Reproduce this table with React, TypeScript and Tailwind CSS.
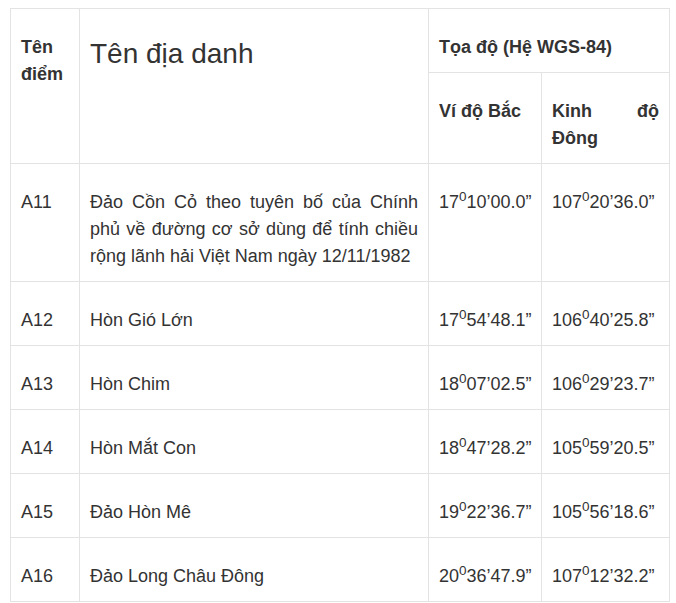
import React from "react";

const rows: { id: string; name: string; lat: [string, string]; lon: [string, string] }[] = [
  {
    id: "A11",
    name: "Đảo Cồn Cỏ theo tuyên bố của Chính phủ về đường cơ sở dùng để tính chiều rộng lãnh hải Việt Nam ngày 12/11/1982",
    lat: ["17", "10’00.0”"],
    lon: ["107", "20’36.0”"],
  },
  { id: "A12", name: "Hòn Gió Lớn", lat: ["17", "54’48.1”"], lon: ["106", "40’25.8”"] },
  { id: "A13", name: "Hòn Chim", lat: ["18", "07’02.5”"], lon: ["106", "29’23.7”"] },
  { id: "A14", name: "Hòn Mắt Con", lat: ["18", "47’28.2”"], lon: ["105", "59’20.5”"] },
  { id: "A15", name: "Đảo Hòn Mê", lat: ["19", "22’36.7”"], lon: ["105", "56’18.6”"] },
  { id: "A16", name: "Đảo Long Châu Đông", lat: ["20", "36’47.9”"], lon: ["107", "12’32.2”"] },
];

function Coord({ v }: { v: [string, string] }) {
  return (
    <>
      {v[0]}
      <sup>0</sup>
      {v[1]}
    </>
  );
}

const cell = "border border-[#e3e3e3] pl-[10px] pr-[10px] pt-[25px] pb-[11px] align-top";

export default function App() {
  return (
    <div
      className="w-[676px] h-[603px] overflow-hidden bg-white text-[#333] text-[18px] leading-[27px] pt-[8px]"
      style={{ fontFamily: '"Liberation Sans", Arial, sans-serif' }}
    >
      <table className="ml-[10px] w-[659px] table-fixed border-collapse">
        <colgroup>
          <col className="w-[69px]" />
          <col className="w-[349px]" />
          <col className="w-[113px]" />
          <col className="w-[128px]" />
        </colgroup>
        <thead>
          <tr>
            <th rowSpan={2} className={`${cell} text-left font-bold`}>
              Tên điểm
            </th>
            <th
              rowSpan={2}
              className="border border-[#e3e3e3] px-[10px] pt-[24px] align-top text-left font-normal text-[28px] leading-[42px]"
            >
              Tên địa danh
            </th>
            <th colSpan={2} className={`${cell} text-left font-bold`}>
              Tọa độ (Hệ WGS-84)
            </th>
          </tr>
          <tr>
            <th className={`${cell} text-left font-bold`}>Ví độ Bắc</th>
            <th className={`${cell} text-justify font-bold`}>Kinh độ Đông</th>
          </tr>
        </thead>
        <tbody>
          {rows.map((r) => (
            <tr key={r.id}>
              <td className={cell}>{r.id}</td>
              <td className={`${cell} text-justify`}>{r.name}</td>
              <td className={`${cell} whitespace-nowrap`}>
                <Coord v={r.lat} />
              </td>
              <td className={`${cell} whitespace-nowrap`}>
                <Coord v={r.lon} />
              </td>
            </tr>
          ))}
        </tbody>
      </table>
    </div>
  );
}
